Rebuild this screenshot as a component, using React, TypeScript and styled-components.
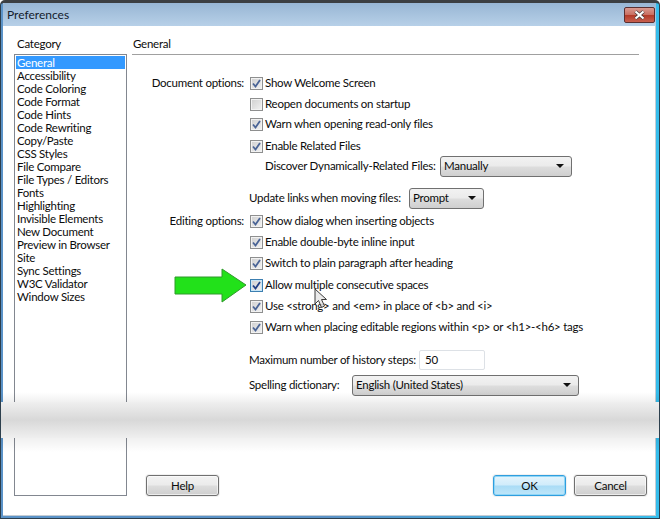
import styled, { createGlobalStyle } from 'styled-components'

const GlobalStyle = createGlobalStyle`
  html, body {
    margin: 0;
    padding: 0;
    background: #fff;
  }
`

const Window = styled.div`
  position: relative;
  box-sizing: border-box;
  width: 660px;
  height: 519px;
  display: flex;
  overflow: hidden;
  padding: 0 3px 2px 2px;
  font-family: Lato, sans-serif;
  font-size: 11.5px;
  letter-spacing: -0.25px;
  color: #0c0c0c;
  background: linear-gradient(90deg, #5b93c8 0%, #5b93c8 50%, #35bdec 100%);
  border: 1px solid #2d3f4d;
  border-top: 3px solid #3c3f42;
  border-top-left-radius: 5px;
  border-top-right-radius: 5px;
`

const Panel = styled.div`
  flex: 1;
  min-width: 0;
  display: flex;
  flex-direction: column;
  background: #fff;
  border-right: 1px solid #c4ccd4;
  border-bottom: 1px solid #c4ccd4;
`

const TitleBar = styled.div`
  flex: none;
  height: 23px;
  display: flex;
  align-items: center;
  justify-content: space-between;
  padding-left: 4px;
  margin-right: -1px;
  background: linear-gradient(#98b6d4, #b7d0e8);
  font-size: 12px;
  letter-spacing: 0;
  color: #14202c;
`

const CloseButton = styled.div`
  width: 31px;
  height: 16px;
  margin: 1px 1px 0 0;
  border: 1px solid #5a2f30;
  border-radius: 2px;
  box-sizing: border-box;
  display: flex;
  align-items: center;
  justify-content: center;
  background: linear-gradient(#d99a90 0%, #c96f62 48%, #b23a28 52%, #c8604f 100%);
`

const Body = styled.div`
  flex: 1;
  min-height: 0;
  display: flex;
  padding: 11px 0 19px 11px;
`

const Sidebar = styled.div`
  width: 113px;
  flex: none;
  display: flex;
  flex-direction: column;
`

const SideLabel = styled.div`
  height: 17px;
  line-height: 14px;
  padding-left: 3px;
`

const List = styled.div`
  flex: 1;
  box-sizing: border-box;
  border: 1px solid #828790;
  padding: 1px;
`

const ListItem = styled.div<{ $selected?: boolean }>`
  height: 13px;
  line-height: 13px;
  padding-left: 1px;
  background: ${p => (p.$selected ? '#3399ff' : 'transparent')};
  color: ${p => (p.$selected ? '#fff' : 'inherit')};
`

const Main = styled.div`
  flex: 1;
  min-width: 0;
  margin: 0 8px 0 5px;
  display: flex;
  flex-direction: column;
`

const Heading = styled.div`
  height: 17px;
  line-height: 14px;
  padding-left: 1px;
  margin-right: 8px;
  border-bottom: 1px solid #a0a0a0;
`

const Form = styled.div`
  flex: 1;
  padding-top: 18px;
`

const Row = styled.div<{ $mt?: number; $indent?: number }>`
  height: 20px;
  display: flex;
  align-items: center;
  margin-top: ${p => p.$mt ?? 0}px;
  padding-left: ${p => p.$indent ?? 118}px;
`

const GroupLabel = styled.div`
  width: 112px;
  margin: 0 6px 2px -118px;
  text-align: right;
  white-space: nowrap;
`

const Check = styled.div<{ $focus?: boolean }>`
  width: 13px;
  height: 13px;
  flex: none;
  box-sizing: border-box;
  margin: 1px 2px 0 0;
  border: 1px solid ${p => (p.$focus ? '#3c7fb1' : '#8e8f8f')};
  box-shadow: inset 0 0 0 1px ${p => (p.$focus ? '#c9e6f7' : '#f2f2f2')};
  background: linear-gradient(135deg, #cfcfcf, #f2f2f2);
  display: flex;
  align-items: center;
  justify-content: center;
`

const CheckText = styled.span`
  white-space: nowrap;
  margin-bottom: 2px;
`

const FieldLabel = styled.div<{ $width: number }>`
  width: ${p => p.$width}px;
  flex: none;
  white-space: nowrap;
  margin-bottom: 2px;
`

const Select = styled.div<{ $width: number }>`
  width: ${p => p.$width}px;
  height: 21px;
  flex: none;
  box-sizing: border-box;
  border: 1px solid #707070;
  border-radius: 3px;
  padding: 0 7px 1px 3px;
  display: flex;
  align-items: center;
  justify-content: space-between;
  background: linear-gradient(#f2f2f2 0%, #ebebeb 48%, #dddddd 52%, #cfcfcf 100%);
`

const Arrow = styled.div`
  width: 0;
  height: 0;
  border-left: 4px solid transparent;
  border-right: 4px solid transparent;
  border-top: 4px solid #111;
`

const NumberInput = styled.div`
  width: 66px;
  height: 20px;
  box-sizing: border-box;
  border: 1px solid #dde1e6;
  border-radius: 2px;
  padding-left: 5px;
  line-height: 17px;
`

const Footer = styled.div`
  height: 21px;
  flex: none;
  display: flex;
  padding-left: 14px;
`

const Button = styled.div<{ $primary?: boolean; $push?: boolean }>`
  width: 73px;
  height: 21px;
  box-sizing: border-box;
  margin-left: ${p => (p.$push ? 'auto' : '0')};
  margin-right: ${p => (p.$push ? '8px' : '0')};
  border: 1px solid ${p => (p.$primary ? '#2f9ede' : '#707070')};
  border-radius: 3px;
  text-align: center;
  line-height: 19px;
  box-shadow: 0 0 0 1px #f1f1f1, inset 0 0 0 1px ${p => (p.$primary ? '#8fd6f7' : 'rgba(255, 255, 255, 0.6)')};
  background: ${p =>
    p.$primary
      ? 'linear-gradient(#e4f4fc 0%, #d0ecfb 48%, #a9dcf6 52%, #bfe6f9 100%)'
      : 'linear-gradient(#f2f2f2 0%, #ebebeb 48%, #dddddd 52%, #cfcfcf 100%)'};
`

const Fade = styled.div`
  position: absolute;
  left: -1px;
  right: -1px;
  top: 389px;
  height: 60px;
  background: linear-gradient(
    rgba(0, 0, 0, 0) 0,
    rgba(0, 0, 0, 0.06) 10px,
    #efefef 10px,
    #d8d8d8 28px,
    #efefef 46px,
    rgba(0, 0, 0, 0.06) 46px,
    rgba(0, 0, 0, 0) 60px
  );
`

const GreenArrow = styled.svg`
  position: absolute;
  left: 173px;
  top: 265px;
`

const Pointer = styled.svg`
  position: absolute;
  left: 313px;
  top: 285px;
`

const categories = [
  'General', 'Accessibility', 'Code Coloring', 'Code Format', 'Code Hints', 'Code Rewriting',
  'Copy/Paste', 'CSS Styles', 'File Compare', 'File Types / Editors', 'Fonts', 'Highlighting',
  'Invisible Elements', 'New Document', 'Preview in Browser', 'Site', 'Sync Settings',
  'W3C Validator', 'Window Sizes',
]

const Tick = ({ focus }: { focus?: boolean }) => (
  <svg width="9" height="9" viewBox="0 0 9 9">
    <path d="M1 4.5 L3.5 7.5 L8 1" fill="none" stroke={focus ? '#1f3f86' : '#4a6496'} strokeWidth="1.8" />
  </svg>
)

const Box = ({ checked = true, focus }: { checked?: boolean; focus?: boolean }) => (
  <Check $focus={focus}>{checked && <Tick focus={focus} />}</Check>
)

export default function App() {
  return (
    <Window>
      <GlobalStyle />
      <Panel>
        <TitleBar>
          Preferences
          <CloseButton>
            <svg width="13" height="10" viewBox="0 0 13 10">
              <path d="M2.5 1.5 L10.5 8.5 M10.5 1.5 L2.5 8.5" stroke="#3f3a3a" strokeWidth="3.6" />
              <path d="M2.5 1.5 L10.5 8.5 M10.5 1.5 L2.5 8.5" stroke="#fff" strokeWidth="2.2" />
            </svg>
          </CloseButton>
        </TitleBar>
        <Body>
          <Sidebar>
            <SideLabel>Category</SideLabel>
            <List>
              {categories.map((c, i) => (
                <ListItem key={c} $selected={i === 0}>{c}</ListItem>
              ))}
            </List>
          </Sidebar>
          <Main>
            <Heading>General</Heading>
            <Form>
              <Row><GroupLabel>Document options:</GroupLabel><Box /><CheckText>Show Welcome Screen</CheckText></Row>
              <Row $mt={1}><Box checked={false} /><CheckText>Reopen documents on startup</CheckText></Row>
              <Row><Box /><CheckText>Warn when opening read-only files</CheckText></Row>
              <Row $mt={2}><Box /><CheckText>Enable Related Files</CheckText></Row>
              <Row $indent={133}>
                <FieldLabel $width={175}>Discover Dynamically-Related Files:</FieldLabel>
                <Select $width={132}>Manually<Arrow /></Select>
              </Row>
              <Row $mt={12} $indent={117}>
                <FieldLabel $width={160}>Update links when moving files:</FieldLabel>
                <Select $width={75}>Prompt<Arrow /></Select>
              </Row>
              <Row $mt={3}><GroupLabel>Editing options:</GroupLabel><Box /><CheckText>Show dialog when inserting objects</CheckText></Row>
              <Row $mt={1}><Box /><CheckText>Enable double-byte inline input</CheckText></Row>
              <Row $mt={1}><Box /><CheckText>Switch to plain paragraph after heading</CheckText></Row>
              <Row $mt={2}><Box focus /><CheckText>Allow multiple consecutive spaces</CheckText></Row>
              <Row $mt={1}><Box /><CheckText>{'Use <strong> and <em> in place of <b> and <i>'}</CheckText></Row>
              <Row $mt={1}><Box /><CheckText>{'Warn when placing editable regions within <p> or <h1>-<h6> tags'}</CheckText></Row>
              <Row $mt={13} $indent={117}>
                <FieldLabel $width={170}>Maximum number of history steps:</FieldLabel>
                <NumberInput>50</NumberInput>
              </Row>
              <Row $mt={5} $indent={117}>
                <FieldLabel $width={103}>Spelling dictionary:</FieldLabel>
                <Select $width={227}>English (United States)<Arrow /></Select>
              </Row>
            </Form>
            <Footer>
              <Button>Help</Button>
              <Button $primary $push>OK</Button>
              <Button>Cancel</Button>
            </Footer>
          </Main>
        </Body>
      </Panel>
      <Fade />
      <GreenArrow width="76" height="40" viewBox="0 0 76 40">
        <path d="M1 9 H48 V1 L72 17 L48 34 V26 H1 Z" fill="#22e11a" stroke="#2f9a2a" strokeWidth="1" />
      </GreenArrow>
      <Pointer width="18" height="22" viewBox="0 0 18 22">
        <path d="M1 1 V16 L4.5 12.5 L7.5 19.5 L10.5 18 L7.5 11.5 H12.5 Z" fill="#e6e6e6" fillOpacity="0.85" stroke="#3a3a3a" strokeWidth="1" />
      </Pointer>
    </Window>
  )
}
